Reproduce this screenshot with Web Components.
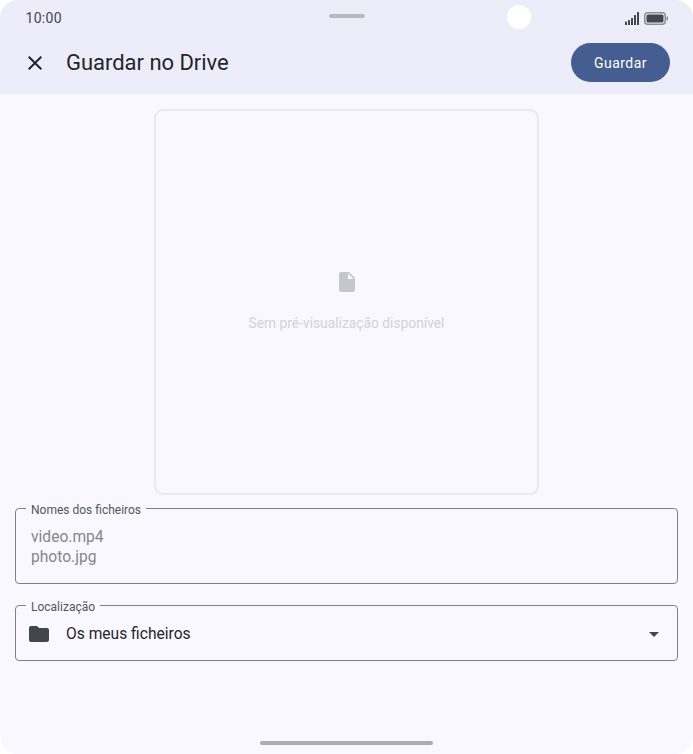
<!DOCTYPE html>
<html lang="pt">
<head>
<meta charset="utf-8">
<title>Guardar no Drive</title>
<style>
  html, body { margin: 0; padding: 0; background: #fff; }
  body { font-family: Roboto, "Liberation Sans", sans-serif; }
</style>
</head>
<body>
<save-screen>
  <app-header title="Guardar no Drive" action="Guardar"></app-header>
  <file-preview message="Sem pré-visualização disponível"></file-preview>
  <outlined-field label="Nomes dos ficheiros" class="names">
    <div>video.mp4</div>
    <div>photo.jpg</div>
  </outlined-field>
  <location-field label="Localização" value="Os meus ficheiros"></location-field>
</save-screen>

<script>
// Frame of the whole screen, with the gesture bar at the bottom
class SaveScreen extends HTMLElement {
  constructor() {
    super();
    this.attachShadow({ mode: 'open' });
    this.shadowRoot.innerHTML = `
      <style>
        :host {
          display: flex;
          flex-direction: column;
          width: 693px;
          height: 754px;
          box-sizing: border-box;
          background: #f9f8ff;
          border-radius: 18px;
          overflow: hidden;
        }
        .content { flex: 1; display: flex; flex-direction: column; }
        .gesture {
          width: 173px;
          height: 4px;
          margin: 0 auto 9px;
          border-radius: 2px;
          background: #acacb0;
        }
      </style>
      <div class="content"><slot></slot></div>
      <div class="gesture"></div>
    `;
  }
}

// Status bar plus top app bar
class AppHeader extends HTMLElement {
  constructor() {
    super();
    this.attachShadow({ mode: 'open' });
    this.shadowRoot.innerHTML = `
      <style>
        :host { display: block; position: relative; background: #ecedf9; height: 94px; }
        .status {
          display: flex;
          align-items: center;
          justify-content: space-between;
          height: 35px;
          padding: 0 24px 0 25.5px;
          font-size: 14px;
          font-weight: 400;
          letter-spacing: 0.3px;
          color: #44464d;
        }
        .status-icons { display: flex; align-items: center; gap: 5px; margin-top: 1px; }
        .status svg { display: block; }
        .handle {
          position: absolute; top: 14px; left: 329px;
          width: 36px; height: 4px; border-radius: 2px; background: #b9b9bd;
        }
        .camera {
          position: absolute; top: 5px; left: 507px;
          width: 24px; height: 24px; border-radius: 50%; background: #fff;
        }
        .bar {
          display: flex;
          align-items: center;
          height: 39px;
          margin-top: 8px;
          padding: 0 23px 0 23px;
        }
        .close { width: 24px; height: 24px; display: block; }
        h1 {
          flex: 1;
          margin: 0 0 0 19px;
          font-size: 22px;
          font-weight: 400;
          letter-spacing: -0.03px;
          color: #24252b;
        }
        button {
          width: 99px;
          height: 39px;
          border: 0;
          border-radius: 20px;
          background: #455e91;
          color: #fff;
          font: 400 14px Roboto, "Liberation Sans", sans-serif;
          letter-spacing: 0.45px;
        }
      </style>
      <div class="status">
        <span>10:00</span>
        <span class="status-icons">
          <svg width="14" height="13" viewBox="0 0 14 13" fill="#44464d">
            <rect x="0" y="9.500" width="2" height="3.500" rx=".5"/>
            <rect x="3" y="8" width="2" height="5" rx=".5"/>
            <rect x="6" y="6" width="2" height="7" rx=".5"/>
            <rect x="9" y="3" width="2" height="10" rx=".5"/>
            <rect x="12" y="0" width="2" height="13" rx=".5"/>
          </svg>
          <svg width="25" height="13" viewBox="0 0 25 13">
            <rect x=".75" y=".75" width="20.500" height="11.500" rx="3" fill="none" stroke="#8d8e94" stroke-width="1.500"/>
            <rect x="2.500" y="2.500" width="17" height="8" rx="1.500" fill="#44464d"/>
            <rect x="22.500" y="4.500" width="1.500" height="4" rx=".75" fill="#8d8e94"/>
          </svg>
        </span>
      </div>
      <div class="handle"></div>
      <div class="camera"></div>
      <div class="bar">
        <svg class="close" viewBox="0 0 24 24" fill="#24252b">
          <path d="M19 6.410 17.590 5 12 10.590 6.410 5 5 6.410 10.590 12 5 17.590 6.410 19 12 13.410 17.590 19 19 17.590 13.410 12z"/>
        </svg>
        <h1></h1>
        <button></button>
      </div>
    `;
    this.shadowRoot.querySelector('h1').textContent = this.getAttribute('title');
    this.shadowRoot.querySelector('button').textContent = this.getAttribute('action');
  }
}

// Empty preview card
class FilePreview extends HTMLElement {
  constructor() {
    super();
    this.attachShadow({ mode: 'open' });
    this.shadowRoot.innerHTML = `
      <style>
        :host {
          display: flex;
          flex-direction: column;
          align-items: center;
          justify-content: center;
          box-sizing: border-box;
          width: 385px;
          height: 386px;
          margin: 15px auto 0 154px;
          padding-bottom: 4px;
          border: 2px solid #e9e9f1;
          border-radius: 9px;
        }
        svg { display: block; width: 24px; height: 24px; }
        p {
          margin: 21px 0 0;
          font-size: 13.800px;
          color: #d2d2d9;
        }
      </style>
      <svg viewBox="0 0 24 24" fill="#c6c6cd">
        <path d="M14 2H6c-1.100 0-2 .9-2 2v16c0 1.100.9 2 2 2h12c1.100 0 2-.9 2-2V8l-6-6zm-1 7V3.500L18.500 9H13z"/>
      </svg>
      <p></p>
    `;
    this.shadowRoot.querySelector('p').textContent = this.getAttribute('message');
  }
}

// Outlined box with its label sitting in the border
class OutlinedField extends HTMLElement {
  constructor() {
    super();
    this.attachShadow({ mode: 'open' });
    this.shadowRoot.innerHTML = `
      <style>
        :host { display: block; margin: 4px 15px 0; }
        fieldset {
          margin: 0;
          box-sizing: border-box;
          height: 85px;
          padding: 10px 15px 0;
          border: 1px solid #7f8088;
          border-radius: 4px;
          font-size: 15.600px;
          line-height: 20px;
          color: #85868c;
        }
        legend {
          padding: 4px 5px 0;
          margin-left: -5px;
          font-size: 12px;
          line-height: 14px;
          color: #54565c;
        }
      </style>
      <fieldset>
        <legend></legend>
        <slot></slot>
      </fieldset>
    `;
    this.shadowRoot.querySelector('legend').textContent = this.getAttribute('label');
  }
}

// Same outline, holding the folder picker
class LocationField extends HTMLElement {
  constructor() {
    super();
    this.attachShadow({ mode: 'open' });
    this.shadowRoot.innerHTML = `
      <style>
        :host { display: block; margin: 12px 15px 0; }
        fieldset {
          margin: 0;
          box-sizing: border-box;
          height: 65px;
          padding: 0 11px;
          border: 1px solid #7f8088;
          border-radius: 4px;
        }
        legend {
          padding: 4px 5px 0;
          margin-left: -1px;
          font-size: 12px;
          line-height: 14px;
          color: #54565c;
        }
        .row { display: flex; align-items: center; height: 40px; }
        svg { display: block; width: 24px; height: 24px; }
        span {
          flex: 1;
          margin-left: 15px;
          font-size: 15.600px;
          color: #24252b;
        }
      </style>
      <fieldset>
        <legend></legend>
        <div class="row">
          <svg viewBox="0 0 24 24" fill="#44464d">
            <path d="M10 4H4c-1.100 0-2 .9-2 2v12c0 1.100.9 2 2 2h16c1.100 0 2-.9 2-2V8c0-1.100-.9-2-2-2h-8l-2-2z"/>
          </svg>
          <span></span>
          <svg viewBox="0 0 24 24" fill="#44464d"><path d="M7 10l5 5 5-5z"/></svg>
        </div>
      </fieldset>
    `;
    this.shadowRoot.querySelector('legend').textContent = this.getAttribute('label');
    this.shadowRoot.querySelector('span').textContent = this.getAttribute('value');
  }
}

customElements.define('save-screen', SaveScreen);
customElements.define('app-header', AppHeader);
customElements.define('file-preview', FilePreview);
customElements.define('outlined-field', OutlinedField);
customElements.define('location-field', LocationField);
</script>
</body>
</html>
